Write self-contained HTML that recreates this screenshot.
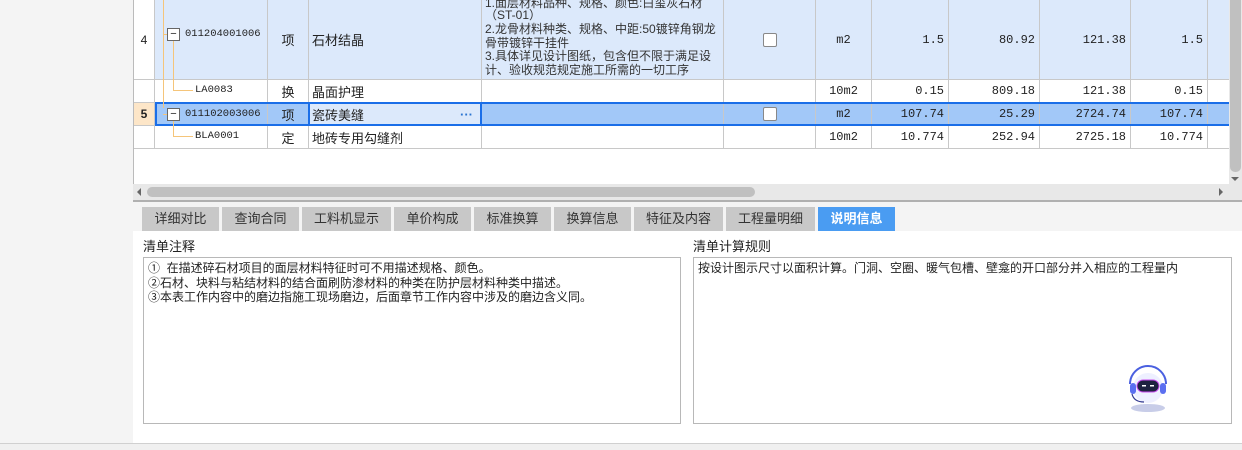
<!DOCTYPE html>
<html><head><meta charset="utf-8"><style>
*{margin:0;padding:0;box-sizing:border-box}
body{width:1242px;height:450px;overflow:hidden;background:#f4f4f4;font-family:"Liberation Sans","Noto Sans CJK SC",sans-serif;font-size:12px;color:#222;position:relative}
.a{position:absolute}
.grid{left:133px;top:0;width:1096px;height:184px;background:#fff;border-left:1px solid #bbb}
.row{position:absolute;left:0;width:1096px;border-bottom:1px solid #c8c8c8}
.c{position:absolute;top:0;height:100%;border-right:1px solid #c8c8c8;display:flex;align-items:center;white-space:nowrap;overflow:hidden}
.r{justify-content:flex-end;padding-right:4px;font-family:"Liberation Mono","Noto Sans CJK SC",monospace;font-size:12px}
.m{justify-content:center;font-family:"Liberation Mono",monospace;font-size:12px}
.mono{font-family:"Liberation Mono",monospace;font-size:10.5px}
.cb{width:14px;height:14px;border:1px solid #888;background:#fff;border-radius:2px}
.box{width:13px;height:13px;border:1px solid #666;background:#fff;position:absolute;font-size:11px;line-height:10px;text-align:center}
.tab{position:absolute;top:207px;height:24px;background:#c8c8c8;color:#333;font-size:13px;text-align:center;line-height:24px}
.fl{position:absolute;left:3px;white-space:nowrap;font-size:12px;color:#333}
</style></head><body>
<div class="a grid">
 <div class="row" style="top:0;height:80px;background:#dce9fb">
  <div class="c" style="left:0;width:21px;background:#fff;justify-content:center">4</div>
  <div class="c" style="left:21px;width:113px"></div>
  <div class="c" style="left:134px;width:41px;justify-content:center;font-size:13px">项</div>
  <div class="c" style="left:175px;width:173px;padding-left:3px;font-size:13px">石材结晶</div>
  <div class="c" style="left:348px;width:242px">
   <div class="fl" style="top:-6px">1.面层材料品种、规格、颜色:白玺灰石材</div>
   <div class="fl" style="top:6px">（ST-01）</div>
   <div class="fl" style="top:20px">2.龙骨材料种类、规格、中距:50镀锌角钢龙</div>
   <div class="fl" style="top:34px">骨带镀锌干挂件</div>
   <div class="fl" style="top:47px">3.具体详见设计图纸，包含但不限于满足设</div>
   <div class="fl" style="top:61px">计、验收规范规定施工所需的一切工序</div>
  </div>
  <div class="c" style="left:590px;width:92px;justify-content:center"><div class="cb"></div></div>
  <div class="c m" style="left:682px;width:56px">m2</div>
  <div class="c r" style="left:738px;width:77px">1.5</div>
  <div class="c r" style="left:815px;width:91px">80.92</div>
  <div class="c r" style="left:906px;width:91px">121.38</div>
  <div class="c r" style="left:997px;width:77px">1.5</div>
 </div>
 <div class="row" style="top:80px;height:23px">
  <div class="c" style="left:0;width:21px"></div>
  <div class="c" style="left:21px;width:113px"></div>
  <div class="c" style="left:134px;width:41px;justify-content:center;font-size:13px">换</div>
  <div class="c" style="left:175px;width:173px;padding-left:3px;font-size:13px">晶面护理</div>
  <div class="c" style="left:348px;width:242px"></div>
  <div class="c" style="left:590px;width:92px"></div>
  <div class="c m" style="left:682px;width:56px">10m2</div>
  <div class="c r" style="left:738px;width:77px">0.15</div>
  <div class="c r" style="left:815px;width:91px">809.18</div>
  <div class="c r" style="left:906px;width:91px">121.38</div>
  <div class="c r" style="left:997px;width:77px">0.15</div>
 </div>
 <div class="row" style="top:103px;height:23px;background:#a2c8f8">
  <div class="c" style="left:0;width:21px;background:#fde6c8;justify-content:center;font-weight:bold">5</div>
  <div class="c" style="left:21px;width:113px"></div>
  <div class="c" style="left:134px;width:41px;justify-content:center;font-size:13px">项</div>
  <div class="c" style="left:175px;width:173px;padding-left:3px;font-size:13px;background:#dce9fb">瓷砖美缝<span style="position:absolute;right:8px;color:#2a74d0;font-weight:bold">···</span></div>
  <div class="c" style="left:348px;width:242px"></div>
  <div class="c" style="left:590px;width:92px;justify-content:center"><div class="cb"></div></div>
  <div class="c m" style="left:682px;width:56px">m2</div>
  <div class="c r" style="left:738px;width:77px">107.74</div>
  <div class="c r" style="left:815px;width:91px">25.29</div>
  <div class="c r" style="left:906px;width:91px">2724.74</div>
  <div class="c r" style="left:997px;width:77px">107.74</div>
 </div>
 <div class="a" style="left:21px;top:102px;width:1075px;height:24px;border:2px solid #1a6ee8;border-right:none"></div>
 <div class="a" style="left:174px;top:102px;width:174px;height:24px;border:2px solid #1a6ee8"></div>
 <div class="row" style="top:126px;height:23px">
  <div class="c" style="left:0;width:21px"></div>
  <div class="c" style="left:21px;width:113px"></div>
  <div class="c" style="left:134px;width:41px;justify-content:center;font-size:13px">定</div>
  <div class="c" style="left:175px;width:173px;padding-left:3px;font-size:13px">地砖专用勾缝剂</div>
  <div class="c" style="left:348px;width:242px"></div>
  <div class="c" style="left:590px;width:92px"></div>
  <div class="c m" style="left:682px;width:56px">10m2</div>
  <div class="c r" style="left:738px;width:77px">10.774</div>
  <div class="c r" style="left:815px;width:91px">252.94</div>
  <div class="c r" style="left:906px;width:91px">2725.18</div>
  <div class="c r" style="left:997px;width:77px">10.774</div>
 </div>
 <div class="a" style="left:29px;top:0;width:1px;height:108px;background:#f5c57a"></div>
 <div class="a" style="left:29px;top:34px;width:4px;height:1px;background:#f5c57a"></div>
 <div class="a" style="left:29px;top:114px;width:4px;height:1px;background:#f5c57a"></div>
 <div class="a" style="left:39px;top:41px;width:1px;height:49px;background:#f5c57a"></div>
 <div class="a" style="left:39px;top:90px;width:20px;height:1px;background:#f5c57a"></div>
 <div class="a" style="left:39px;top:121px;width:1px;height:16px;background:#f5c57a"></div>
 <div class="a" style="left:39px;top:136px;width:20px;height:1px;background:#f5c57a"></div>
 <div class="box" style="left:33px;top:28px">−</div>
 <div class="a mono" style="left:51px;top:28px">011204001006</div>
 <div class="a mono" style="left:61px;top:84px">LA0083</div>
 <div class="box" style="left:33px;top:108px">−</div>
 <div class="a mono" style="left:51px;top:108px">011102003006</div>
 <div class="a mono" style="left:61px;top:130px">BLA0001</div>
</div>
<div class="a" style="left:1229px;top:0;width:13px;height:200px;background:#e8e8e8"></div>
<div class="a" style="left:1230px;top:0;width:11px;height:172px;background:#c0c0c0;border-radius:0 0 5px 5px"></div>
<div class="a" style="left:1231px;top:177px;width:0;height:0;border-left:4px solid transparent;border-right:4px solid transparent;border-top:4px solid #666"></div>
<div class="a" style="left:133px;top:184px;width:1096px;height:16px;background:#e8e8e8"></div>
<div class="a" style="left:147px;top:187px;width:608px;height:10px;background:#c0c0c0;border-radius:5px"></div>
<div class="a" style="left:137px;top:188px;width:0;height:0;border-top:4px solid transparent;border-bottom:4px solid transparent;border-right:4px solid #666"></div>
<div class="a" style="left:1219px;top:188px;width:0;height:0;border-top:4px solid transparent;border-bottom:4px solid transparent;border-left:4px solid #666"></div>
<div class="a" style="left:133px;top:200px;width:1109px;height:2px;background:#b0b0b0"></div>
<div class="tab" style="left:142px;width:77px">详细对比</div>
<div class="tab" style="left:222px;width:77px">查询合同</div>
<div class="tab" style="left:302px;width:89px">工料机显示</div>
<div class="tab" style="left:394px;width:77px">单价构成</div>
<div class="tab" style="left:474px;width:77px">标准换算</div>
<div class="tab" style="left:554px;width:77px">换算信息</div>
<div class="tab" style="left:634px;width:89px">特征及内容</div>
<div class="tab" style="left:726px;width:89px">工程量明细</div>
<div class="tab" style="left:818px;width:77px;background:#4a9cf2;color:#fff;font-weight:bold">说明信息</div>
<div class="a" style="left:133px;top:231px;width:1109px;height:212px;background:#fff"></div>
<div class="a" style="left:143px;top:236px;font-size:13px">清单注释</div>
<div class="a" style="left:693px;top:236px;font-size:13px">清单计算规则</div>
<div class="a" style="left:143px;top:257px;width:538px;height:167px;border:1px solid #b8b8b8;padding:3px 0 0 4px;font-size:12px;line-height:14.5px">①&nbsp; 在描述碎石材项目的面层材料特征时可不用描述规格、颜色。<br>②石材、块料与粘结材料的结合面刷防渗材料的种类在防护层材料种类中描述。<br>③本表工作内容中的磨边指施工现场磨边，后面章节工作内容中涉及的磨边含义同。</div>
<div class="a" style="left:693px;top:257px;width:539px;height:167px;border:1px solid #b8b8b8;padding:3px 0 0 4px;font-size:12px;line-height:14.5px">按设计图示尺寸以面积计算。门洞、空圈、暖气包槽、壁龛的开口部分并入相应的工程量内</div>
<svg class="a" style="left:1118px;top:364px" width="60" height="50" viewBox="0 0 60 50">
 <ellipse cx="30" cy="44" rx="17" ry="4" fill="#c8cde8"/>
 <path d="M12 20 A18 18 0 0 1 48 20" fill="none" stroke="#4a60e0" stroke-width="2"/>
 <circle cx="30" cy="24" r="15" fill="#eef0ff"/>
 <rect x="12" y="19" width="6" height="11" rx="3" fill="#5b6ff0"/>
 <rect x="42" y="19" width="6" height="11" rx="3" fill="#5b6ff0"/>
 <rect x="19" y="16" width="22" height="12" rx="6" fill="#1e2240" stroke="#c94cf0" stroke-width="1"/>
 <rect x="24" y="21" width="4" height="1.5" fill="#fff"/><rect x="32" y="21" width="4" height="1.5" fill="#fff"/>
 <path d="M14 30 Q16 38 26 38" fill="none" stroke="#333a90" stroke-width="1.2"/>
</svg>
<div class="a" style="left:0;top:443px;width:1242px;height:7px;background:#f0f0f0;border-top:1px solid #d0d0d0"></div>
</body></html>
